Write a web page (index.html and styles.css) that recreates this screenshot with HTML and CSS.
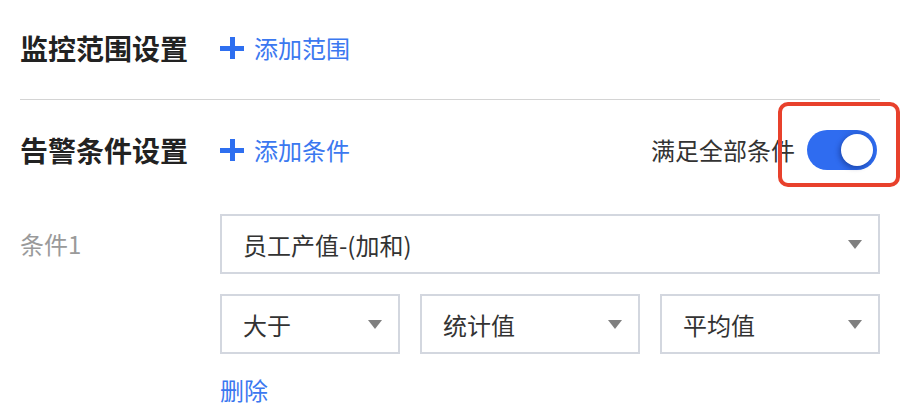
FILE: index.html
```html
<!DOCTYPE html>
<html lang="zh-CN">
<head>
<meta charset="utf-8">
<title>告警设置</title>
<link rel="stylesheet" href="styles.css">
</head>
<body>
<div class="page">
  <div class="head head-first">
    <h2 class="title">监控范围设置</h2>
    <a class="add"><span class="plus"></span><span>添加范围</span></a>
  </div>
  <div class="divider"></div>
  <div class="head head-second">
    <h2 class="title">告警条件设置</h2>
    <a class="add"><span class="plus"></span><span>添加条件</span></a>
    <div class="all">
      <span class="all-label">满足全部条件</span>
      <span class="switch-wrap">
        <span class="switch"><span class="knob"></span></span>
        <span class="highlight"></span>
      </span>
    </div>
  </div>
  <div class="cond">
    <div class="cond-label">条件1</div>
    <div class="cond-body">
      <div class="select wide"><span>员工产值-(加和)</span><i class="arrow"></i></div>
      <div class="select-row">
        <div class="select s1"><span>大于</span><i class="arrow"></i></div>
        <div class="select s2"><span>统计值</span><i class="arrow"></i></div>
        <div class="select s2"><span>平均值</span><i class="arrow"></i></div>
      </div>
      <a class="del">删除</a>
    </div>
  </div>
</div>
</body>
</html>
```
FILE: styles.css
```css
* { box-sizing: border-box; }
html, body { margin: 0; padding: 0; background: #fff; }
body {
  font-family: "Noto Sans CJK SC", "Noto Sans", sans-serif;
  color: #333;
}
.page {
  width: 860px;
  margin-left: 20px;
}
.head {
  display: flex;
  align-items: center;
}
.head-first { height: 60px; margin-top: 18px; }
.head-second { height: 100px; }
.title {
  margin: 0;
  font-size: 28px;
  font-weight: 700;
  color: #222;
  line-height: 40px;
  width: 200px;
}
.add {
  display: flex;
  align-items: center;
  color: #3b78f0;
  font-size: 24px;
  line-height: 36px;
  gap: 10px;
}
.plus {
  position: relative;
  width: 24px;
  height: 22px;
  display: inline-block;
}
.plus::before, .plus::after {
  content: "";
  position: absolute;
  background: #2e6ff0;
}
.plus::before { left: 0; right: 0; top: 8.5px; height: 5px; }
.plus::after { top: 0; bottom: 0; left: 9.5px; width: 5px; }
.divider {
  height: 1px;
  background: #d4d4d4;
  margin-top: 21px;
}
.all {
  margin-left: auto;
  display: flex;
  align-items: center;
  gap: 12px;
  margin-right: 3px;
}
.all-label { font-size: 24px; color: #333; line-height: 36px; }
.switch-wrap { position: relative; display: block; }
.switch {
  display: block;
  position: relative;
  width: 70px;
  height: 40px;
  border-radius: 20px;
  background: linear-gradient(90deg, #2f6cf0 0%, #2f6cf0 45%, #2a63df 80%, #2f6cf0 100%);
}
.knob {
  position: absolute;
  right: 4px;
  top: 4px;
  width: 32px;
  height: 32px;
  border-radius: 50%;
  background: #fff;
  box-shadow: -2px 2px 5px rgba(0, 20, 80, 0.35);
}
.highlight {
  position: absolute;
  left: -29px;
  right: -23px;
  top: -28px;
  bottom: -17px;
  border: 4px solid #e8412c;
  border-radius: 10px;
}
.cond {
  display: flex;
  margin-top: 14px;
}
.cond-label {
  width: 200px;
  font-size: 24px;
  line-height: 60px;
  color: #9a9a9a;
}
.cond-body {
  display: flex;
  flex-direction: column;
  gap: 20px;
  width: 660px;
}
.select {
  height: 60px;
  border: 2px solid #d3d7df;
  display: flex;
  align-items: center;
  padding: 0 16px 0 21px;
  font-size: 24px;
  color: #333;
}
.select span { flex: 1; }
.select-row { display: flex; gap: 20px; }
.s1 { width: 180px; }
.s2 { width: 220px; }
.arrow {
  width: 0;
  height: 0;
  border-left: 7.5px solid transparent;
  border-right: 7.5px solid transparent;
  border-top: 9px solid #7f7f7f;
}
.del {
  color: #3b78f0;
  font-size: 24px;
  line-height: 36px;
  margin-top: -2px;
}
```
